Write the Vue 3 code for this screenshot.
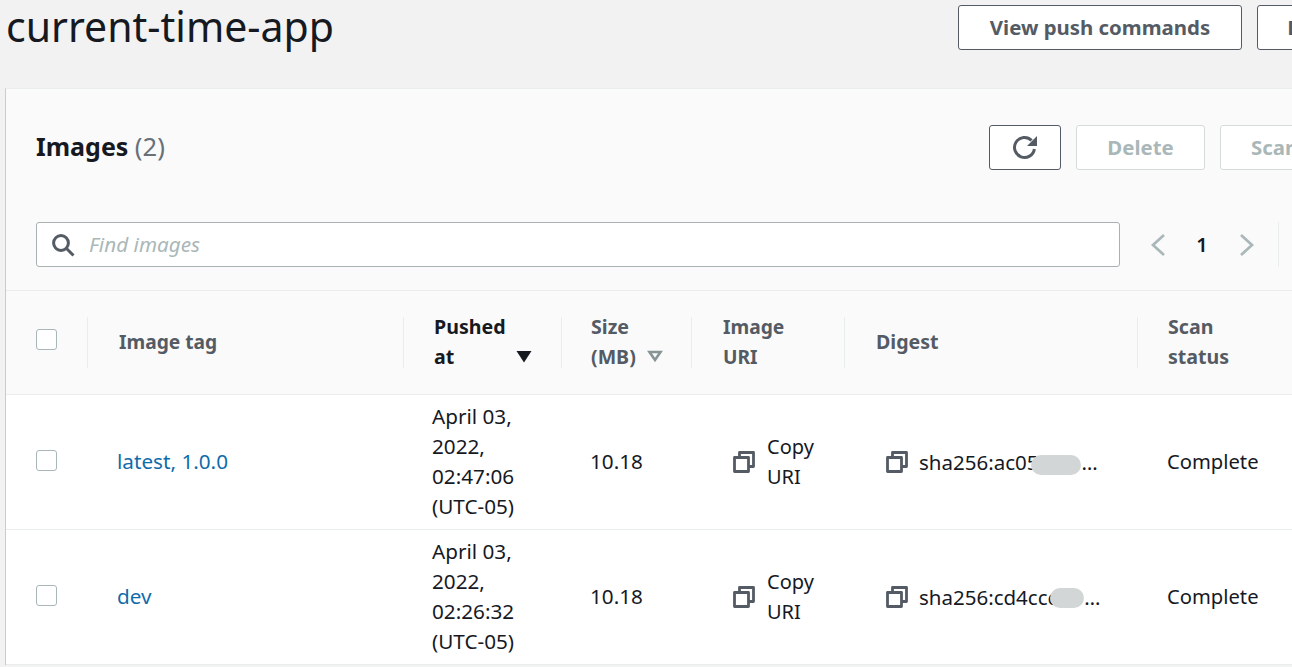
<script setup>
const columns = [
  { label: 'Image tag', sort: '' },
  { label: 'Pushed at', sort: 'active' },
  { label: 'Size (MB)', sort: 'idle' },
  { label: 'Image URI', sort: '' },
  { label: 'Digest', sort: '' },
  { label: 'Scan status', sort: '' },
]
const rows = [
  { tag: 'latest, 1.0.0', pushed: ['April 03,', '2022,', '02:47:06', '(UTC-05)'], size: '10.18', digest: 'sha256:ac05', blob: 'blob-a' },
  { tag: 'dev', pushed: ['April 03,', '2022,', '02:26:32', '(UTC-05)'], size: '10.18', digest: 'sha256:cd4ccc', blob: 'blob-b' },
]
</script>

<template>
  <div class="page">
    <header class="top">
      <h1>current-time-app</h1>
      <div class="top-actions">
        <button class="btn push"><span>View push commands</span></button>
        <button class="btn edit"><span>Edit</span></button>
      </div>
    </header>

    <section class="panel">
      <div class="panel-head">
        <h2>Images <span class="count">(2)</span></h2>
        <div class="panel-actions">
          <button class="btn refresh" aria-label="Refresh">
            <svg width="28" height="28" viewBox="0 0 28 28" fill="none">
              <path d="M20.6 6.4A10 10 0 1 0 23.4 15" stroke="#545b64" stroke-width="3" />
              <path d="M26 2V12H16Z" fill="#545b64" />
            </svg>
          </button>
          <button class="btn off del"><span>Delete</span></button>
          <button class="btn off scan"><span>Scan</span></button>
        </div>
      </div>

      <div class="filter-row">
        <div class="search">
          <svg width="24" height="24" viewBox="0 0 24 24" fill="none" stroke="#545b64">
            <circle cx="10" cy="10" r="7.4" stroke-width="3" />
            <path d="M15.5 15.500 22.500 22.500" stroke-width="3" />
          </svg>
          <span class="placeholder">Find images</span>
        </div>
        <div class="pager">
          <svg width="16" height="24" viewBox="0 0 16 24" fill="none" stroke="#aab7b8" stroke-width="2.7"><path d="M14 2 3 12l11 10" /></svg>
          <b>1</b>
          <svg width="16" height="24" viewBox="0 0 16 24" fill="none" stroke="#aab7b8" stroke-width="2.7"><path d="M2 2l11 10L2 22" /></svg>
          <i class="pager-line"></i>
        </div>
      </div>

      <div class="grid thead">
        <div class="cell check"><span class="box"></span></div>
        <div v-for="(c, i) in columns" :key="c.label" class="cell th" :class="[`th-${i}`, { current: c.sort === 'active' }]">
          <span class="th-label">{{ c.label }}</span>
          <svg v-if="c.sort === 'active'" class="sort" width="16" height="13" viewBox="0 0 16 13"><path d="M0.5 1h15L8 12.5Z" fill="#16191f" /></svg>
          <svg v-if="c.sort === 'idle'" class="sort idle" width="16" height="13" viewBox="0 0 16 13" fill="none"><path d="M2.5 2h11L8 10Z" stroke="#879596" stroke-width="2.6" /></svg>
        </div>
      </div>

      <div v-for="r in rows" :key="r.tag" class="grid tr">
        <div class="cell check"><span class="box"></span></div>
        <div class="cell td tag"><a href="#" class="link">{{ r.tag }}</a></div>
        <div class="cell td pushed"><span v-for="l in r.pushed" :key="l">{{ l }}</span></div>
        <div class="cell td size">{{ r.size }}</div>
        <div class="cell td uri">
          <svg class="copy" width="22" height="22" viewBox="0 0 22 22" fill="none" stroke="#545b64" stroke-width="2.8" stroke-linejoin="round"><path d="M1.500 6.500h14v14h-14z" /><path d="M6.500 6V1.500h14v14H16" /></svg>
          <span>Copy<br />URI</span>
        </div>
        <div class="cell td digest">
          <svg class="copy" width="22" height="22" viewBox="0 0 22 22" fill="none" stroke="#545b64" stroke-width="2.8" stroke-linejoin="round"><path d="M1.500 6.500h14v14h-14z" /><path d="M6.500 6V1.500h14v14H16" /></svg>
          <span class="hash">{{ r.digest }}<i class="blob" :class="r.blob"></i>…</span>
        </div>
        <div class="cell td status">Complete</div>
      </div>
    </section>
  </div>
</template>

<style>
html, body { margin: 0; background: #f2f3f3; overflow: hidden; }
</style>

<style scoped>
.page {
  width: 1292px;
  height: 667px;
  overflow: hidden;
  background: #f2f2f2;
  font-family: "Noto Sans", "Open Sans", sans-serif;
  color: #16191f;
  font-size: 20.7px;
}
.top {
  height: 88px;
  display: flex;
  justify-content: space-between;
  padding-left: 6px;
  padding-top: 5px;
  box-sizing: border-box;
}
h1 {
  margin: -1px 0 0;
  font-size: 41px;
  font-weight: 400;
  line-height: 44px;
  height: 44px;
  white-space: nowrap;
}
.top-actions {
  display: flex;
  gap: 15px;
  flex: none;
  width: 334px;
}
.btn {
  font-family: inherit;
  font-size: 20.4px;
  font-weight: 700;
  box-sizing: border-box;
  background: #fff;
  border: 1px solid #545b64;
  border-radius: 3px;
  color: #545b64;
  height: 45px;
  padding: 0 0 2px;
  flex: none;
  white-space: nowrap;
  overflow: hidden;
}
.push { width: 284px; }
.edit { width: 100px; }
.panel {
  margin-left: 5px;
  background: #fff;
  border-left: 1px solid #c8cccc;
  border-top: 1px solid #eaeded;
  height: 577px;
  box-sizing: border-box;
}
.panel-head {
  height: 125px;
  background: #fafafa;
  display: flex;
  justify-content: space-between;
  padding: 36px 0 0 30px;
  box-sizing: border-box;
}
h2 {
  margin: 0;
  font-size: 25px;
  line-height: 42px;
  font-weight: 700;
  white-space: nowrap;
}
.count { font-weight: 400; color: #687078; font-size: 25.6px; }
.panel-actions {
  display: flex;
  gap: 15px;
  width: 303px;
  flex: none;
}
.refresh { width: 72px; padding: 0; display: flex; align-items: center; justify-content: center; }
.off { background: #fff; border-color: #d5dbdb; color: #aab7b8; }
.del { width: 129px; }
.scan { width: 100px; text-align: left; padding-left: 30px; }
.filter-row {
  height: 77px;
  padding-top: 8px;
  box-sizing: border-box;
  background: #fafafa;
  border-bottom: 1px solid #eaeded;
  display: flex;
  padding-left: 30px;
}
.search {
  width: 1084px;
  height: 45px;
  box-sizing: border-box;
  background: #fff;
  border: 1px solid #a9b1b2;
  border-radius: 3px;
  display: flex;
  align-items: center;
  gap: 14px;
  padding-left: 14px;
  font-style: italic;
  color: #aab7b8;
  flex: none;
}
.placeholder { padding-bottom: 2px; }
.pager {
  display: flex;
  align-items: center;
  height: 45px;
  padding-left: 30px;
}
.pager b { width: 74px; text-align: center; font-size: 20px; color: #16191f; font-weight: 600; margin-left: -1px; }
.pager-line { display: block; width: 1px; height: 45px; background: #eaeded; margin-left: 23px; }
.grid {
  display: grid;
  grid-template-columns: 81px 316px 158px 130px 153px 293px 153px;
  width: 1286px;
}
.cell { box-sizing: border-box; display: flex; align-items: center; }
.thead {
  height: 104px;
  padding-bottom: 2px;
  background: #fafafa;
  border-bottom: 1px solid #eaeded;
  box-sizing: border-box;
  font-weight: 700;
  font-size: 19.6px;
  color: #545b64;
  line-height: 30px;
}
.th {
  position: relative;
  padding: 0 30px;
}
.th::before {
  content: "";
  position: absolute;
  left: 0;
  top: 26px;
  bottom: 24px;
  width: 1px;
  background: #eaeded;
}
.th-0, .th-3, .th-4 { padding-left: 32px; }
.th-0, .th-3 { font-size: 19.2px; }
.th-1, .th-5 { padding-left: 31px; }
.th-label { display: block; }
.th.current { color: #16191f; padding-right: 40px; }
.sort { position: absolute; }
.sort:not(.idle) { left: 113px; top: 59px; }
.sort.idle { left: 86px; top: 59px; }
.check { padding-left: 30px; padding-bottom: 4px; }
.box {
  display: block;
  width: 21px;
  height: 21px;
  box-sizing: border-box;
  border: 1px solid #aab7b8;
  border-radius: 3px;
  background: #fff;
}
.tr {
  height: 135px;
  border-bottom: 1px solid #eaeded;
  box-sizing: border-box;
  line-height: 30px;
  background: #fff;
}
.td { padding-left: 30px; }
.tag { padding-bottom: 2px; }
.link { color: #0f6cab; text-decoration: none; }
.pushed { flex-direction: column; align-items: flex-start; justify-content: center; padding-left: 29px; padding-bottom: 2px; }
.size { padding-left: 29px; padding-bottom: 2px; }
.uri { padding-left: 42px; gap: 12px; font-size: 20px; }
.digest { padding-left: 42px; gap: 11px; font-size: 20.5px; }
.copy { flex: none; }
.hash { white-space: nowrap; }
.blob { display: inline-block; vertical-align: middle; background: #d3d6d6; border-radius: 12px; }
.blob-a { width: 50px; height: 20px; margin-left: -7px; }
.blob-b { width: 34px; height: 20px; margin-left: -7px; transform: translateY(-2px); }
.status { font-size: 20.2px; padding-bottom: 2px; }
</style>
